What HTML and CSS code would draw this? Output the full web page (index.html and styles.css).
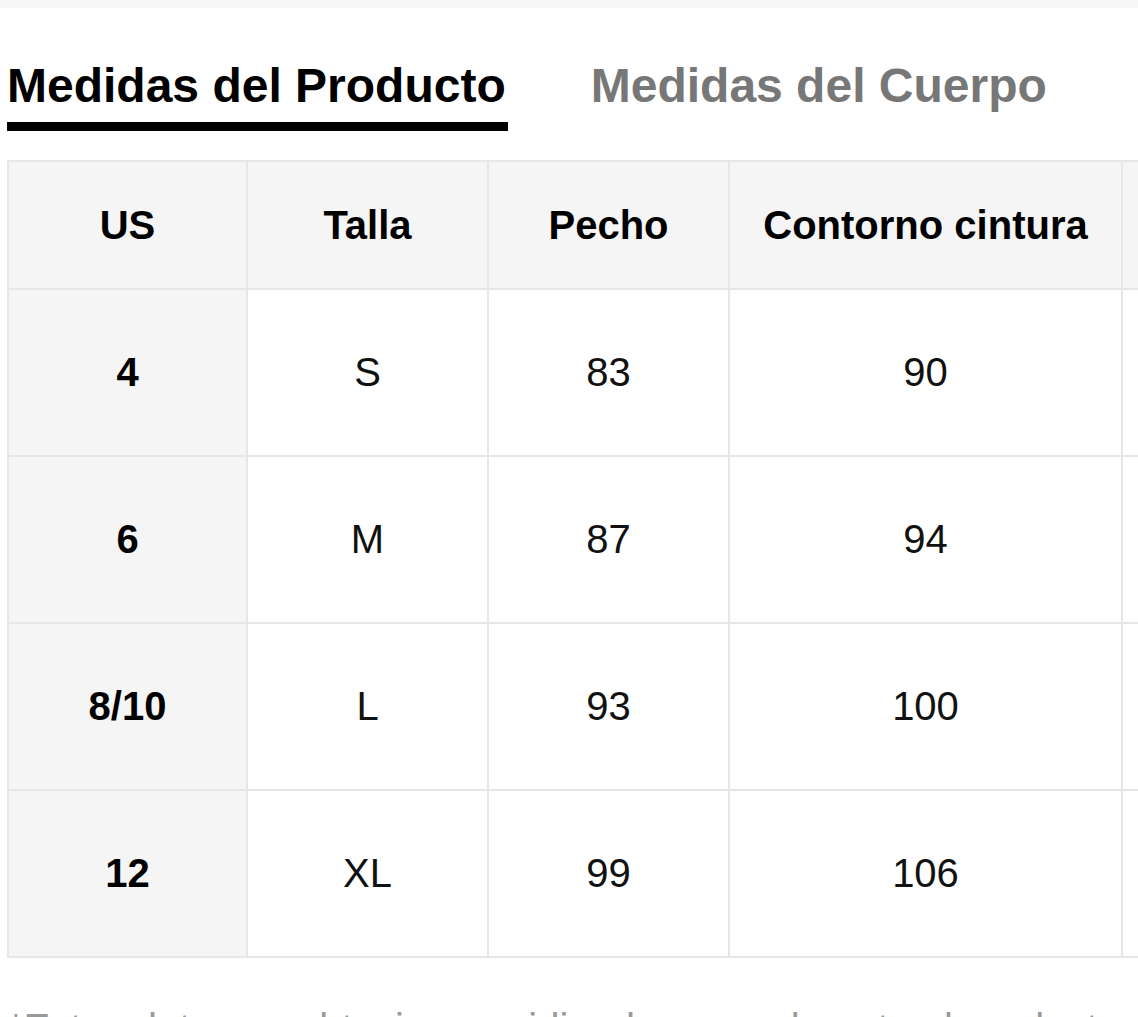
FILE: index.html
```html
<!DOCTYPE html>
<html lang="es">
<head>
<meta charset="utf-8">
<title>Medidas</title>
<link rel="stylesheet" href="styles.css">
</head>
<body>
<div class="topbar"></div>
<div class="tabs">
  <div class="tab active">Medidas del Producto</div>
  <div class="tab">Medidas del Cuerpo</div>
</div>
<div class="table-wrap">
  <table class="sizes">
    <colgroup>
      <col class="c1"><col class="c2"><col class="c3"><col class="c4"><col class="c5">
    </colgroup>
    <thead>
      <tr><th>US</th><th>Talla</th><th>Pecho</th><th>Contorno cintura</th><th></th></tr>
    </thead>
    <tbody>
      <tr><td class="first">4</td><td>S</td><td>83</td><td>90</td><td></td></tr>
      <tr><td class="first">6</td><td>M</td><td>87</td><td>94</td><td></td></tr>
      <tr><td class="first">8/10</td><td>L</td><td>93</td><td>100</td><td></td></tr>
      <tr><td class="first">12</td><td>XL</td><td>99</td><td>106</td><td></td></tr>
    </tbody>
  </table>
</div>
<p class="note">*Estos datos se obtuvieron midiendo manualmente el producto, puede haber una diferencia de 1-2 cm.</p>
</body>
</html>
```
FILE: styles.css
```css
html, body {
  margin: 0;
  padding: 0;
  background: #fff;
  overflow: hidden;
  font-family: "Liberation Sans", Arial, Helvetica, sans-serif;
  color: #000;
}

.topbar {
  height: 8px;
  background: #f6f6f6;
}

.tabs {
  display: flex;
  gap: 81px;
  padding: 50px 0 0 7px;
}

.tab {
  font-size: 48px;
  font-weight: bold;
  line-height: 56px;
  padding: 0 2px 8px;
  color: #777;
  border-bottom: 9px solid transparent;
  white-space: nowrap;
}

.tab.active {
  padding-left: 0;
  color: #000;
  border-bottom-color: #000;
}

.table-wrap {
  margin: 29px 0 0 7px;
  overflow: hidden;
  width: 1131px;
}

.sizes {
  border-collapse: collapse;
  table-layout: fixed;
  width: 1400px;
  font-size: 40px;
}

.sizes col.c1 { width: 239px; }
.sizes col.c2 { width: 241px; }
.sizes col.c3 { width: 241px; }
.sizes col.c4 { width: 393px; }
.sizes col.c5 { width: 286px; }

.sizes th,
.sizes td {
  border: 2px solid #e6e6e6;
  text-align: center;
  vertical-align: middle;
  padding: 0;
  white-space: nowrap;
}

.sizes th {
  height: 126px;
  background: #f5f5f5;
  font-weight: bold;
  color: #000;
}

.sizes td {
  height: 165px;
  color: #111;
}

.sizes td.first {
  background: #f5f5f5;
  font-weight: bold;
  color: #000;
}

.note {
  margin: 48px 0 0 8px;
  font-size: 40px;
  color: #999;
  white-space: nowrap;
}
```
